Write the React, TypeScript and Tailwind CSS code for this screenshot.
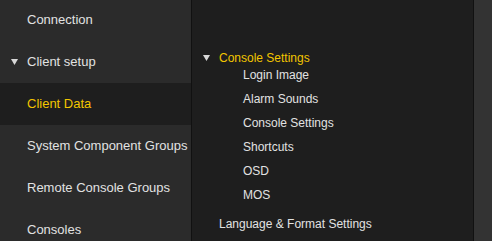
import React from 'react';

const sideItems = [
  { label: 'Connection' },
  { label: 'Client setup', open: true },
  { label: 'Client Data', active: true },
  { label: 'System Component Groups' },
  { label: 'Remote Console Groups' },
  { label: 'Consoles' },
];

const children = ['Login Image', 'Alarm Sounds', 'Console Settings', 'Shortcuts', 'OSD', 'MOS'];

const Caret = () => (
  <svg width="7" height="6" viewBox="0 0 7 6" className="shrink-0">
    <path d="M0 0 H7 L3.5 6 Z" fill="#d8d8d8" />
  </svg>
);

export default function App() {
  return (
    <div
      className="flex h-[241px] w-[492px] overflow-hidden bg-[#1e1e1e] text-[#e2e2e2]"
      style={{ fontFamily: '"Liberation Sans", Arial, sans-serif' }}
    >
      {/* sidebar */}
      <div className="w-[192px] shrink-0 bg-[#2b2b2b] border-r border-[#111]">
        <div className="-mt-px">
          {sideItems.map((item) => (
            <div
              key={item.label}
              className={`h-[42px] flex items-center text-[13px] whitespace-nowrap ${
                item.active ? 'bg-[#1e1e1e] text-[#f2c500]' : ''
              }`}
            >
              <div className="w-[27px] flex justify-center pl-[2px]">{item.open && <Caret />}</div>
              <span>{item.label}</span>
            </div>
          ))}
        </div>
      </div>

      {/* main */}
      <div className="w-[281px] shrink-0 bg-[#1e1e1e] pt-[50px] text-[12px]">
        <div className="flex items-center h-[15px]">
          <div className="w-[27px] flex justify-center pl-[2px]">
            <Caret />
          </div>
          <span className="text-[#f2c500]">Console Settings</span>
        </div>
        <div className="pl-[51px] -mt-[2px]">
          {children.map((c) => (
            <div key={c} className="h-[24px] flex items-center">
              {c}
            </div>
          ))}
        </div>
        <div className="pl-[27px] h-[15px] mt-[9px] flex items-center">Language &amp; Format Settings</div>
      </div>

      {/* right strip */}
      <div className="flex-1 bg-[#333] border-l border-[#111]" />
    </div>
  );
}
